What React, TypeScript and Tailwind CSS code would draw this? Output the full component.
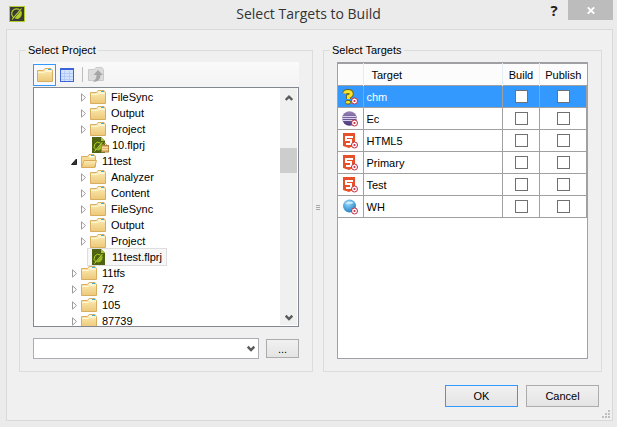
import React, { useState } from "react";

type NodeKind = "folder" | "open" | "file" | "locked";
type TreeNode = { label: string; level: 1 | 2; kind: NodeKind; selected?: boolean };

const NODES: TreeNode[] = [
  { label: "FileSync", level: 2, kind: "folder" },
  { label: "Output", level: 2, kind: "folder" },
  { label: "Project", level: 2, kind: "folder" },
  { label: "10.flprj", level: 2, kind: "locked" },
  { label: "11test", level: 1, kind: "open" },
  { label: "Analyzer", level: 2, kind: "folder" },
  { label: "Content", level: 2, kind: "folder" },
  { label: "FileSync", level: 2, kind: "folder" },
  { label: "Output", level: 2, kind: "folder" },
  { label: "Project", level: 2, kind: "folder" },
  { label: "11test.flprj", level: 2, kind: "file", selected: true },
  { label: "11tfs", level: 1, kind: "folder" },
  { label: "72", level: 1, kind: "folder" },
  { label: "105", level: 1, kind: "folder" },
  { label: "87739", level: 1, kind: "folder" },
];

type TargetKind = "help" | "eclipse" | "html5" | "globe";
const TARGETS: { name: string; kind: TargetKind }[] = [
  { name: "chm", kind: "help" },
  { name: "Ec", kind: "eclipse" },
  { name: "HTML5", kind: "html5" },
  { name: "Primary", kind: "html5" },
  { name: "Test", kind: "html5" },
  { name: "WH", kind: "globe" },
];

function Gradients() {
  return (
    <svg width="0" height="0" className="absolute" aria-hidden="true">
      <defs>
        <linearGradient id="folder" x1="0" y1="0" x2="0" y2="1">
          <stop offset="0" stopColor="#fdeeb8" />
          <stop offset="1" stopColor="#ecc877" />
        </linearGradient>
        <radialGradient id="globe" cx="0.4" cy="0.3" r="0.7">
          <stop offset="0" stopColor="#a9dcf8" />
          <stop offset="0.5" stopColor="#58aee2" />
          <stop offset="1" stopColor="#2f82c2" />
        </radialGradient>
        <linearGradient id="sphere" x1="0" y1="0" x2="0" y2="1">
          <stop offset="0" stopColor="#9a86b8" />
          <stop offset="1" stopColor="#4a3578" />
        </linearGradient>
      </defs>
    </svg>
  );
}

function FolderIcon() {
  return (
    <svg width="16" height="14" viewBox="0 0 16 14" aria-hidden="true">
      <path d="M0.5 13.5V2.5H6.5L8 0.5H14L15.5 2.5V13.5Z" fill="url(#folder)" stroke="#d8ae62" />
      <path d="M8.5 1.5H13.5V2.5H8Z" fill="#fff" />
      <path d="M11 1.5H14" stroke="#35b4cf" />
      <path d="M1 4.5H7L8.5 3.5H15" fill="none" stroke="#fff5d2" />
    </svg>
  );
}

function OpenFolderIcon() {
  return (
    <svg width="16" height="14" viewBox="0 0 16 14" aria-hidden="true">
      <path d="M0.5 13V2.5H6.5L8 0.5H13L14.5 2.5V13Z" fill="#f6dc94" stroke="#d8ae62" />
      <path d="M8.5 1.5H13V3.5H8Z" fill="#fff" />
      <path d="M10 1.5H13" stroke="#35b4cf" />
      <path d="M3 6.5H15.5L13.5 13.5H0.5Z" fill="url(#folder)" stroke="#d9ab58" />
    </svg>
  );
}

function ProjectIcon({ locked }: { locked?: boolean }) {
  return (
    <svg width="18" height="16" viewBox="0 0 18 16" aria-hidden="true">
      <path d="M0 0H9L13 4V16H0Z" fill="#4f6312" />
      <path d="M9 0L13 4H9Z" fill="#a9c43b" />
      <path d="M8.5 6A4 4 0 1 0 4 12.8" fill="none" stroke="#b3d12c" />
      <path d="M10 6.5C11.5 9 10 13 6 13.5L4.8 12.8Z" fill="#9dbd25" />
      <path d="M2.5 14.5L10.5 5" stroke="#c4e23a" />
      {locked && (
        <g>
          <path d="M11.5 9V7.5Q13 5 14.5 7.5V9" fill="none" stroke="#b98c4e" />
          <rect x="9.5" y="8.5" width="7" height="6.5" fill="#e3b66c" stroke="#b98543" />
          <path d="M10 10.5H16M10 12.5H16" stroke="#f7dca4" />
        </g>
      )}
    </svg>
  );
}

function Expander({ open }: { open?: boolean }) {
  return (
    <svg width="7" height="9" viewBox="0 0 7 9" aria-hidden="true">
      {open ? (
        <path d="M5.5 2V7.5H0.5Z" fill="#333" stroke="#222" />
      ) : (
        <path d="M1.5 0.8L5.5 4.5L1.5 8.2Z" fill="#fff" stroke="#9c9c9c" />
      )}
    </svg>
  );
}

function Bullseye() {
  return (
    <g>
      <circle cx="12.5" cy="12" r="3" fill="#fff" stroke="#c8283c" />
      <circle cx="12.5" cy="12" r="1.1" fill="#c8283c" />
    </g>
  );
}

function TargetIcon({ kind }: { kind: TargetKind }) {
  return (
    <svg width="16" height="16" viewBox="0 0 16 16" className="mx-auto block" aria-hidden="true">
      {kind === "help" && (
        <g>
          <path d="M2.5 4.5Q3 2.5 6 2.5Q9.3 2.5 9.3 5Q9.3 6.5 6.5 7.5V10" fill="none" stroke="#6d6412" strokeWidth="4.8" />
          <path d="M2.5 4.5Q3 2.5 6 2.5Q9.3 2.5 9.3 5Q9.3 6.5 6.5 7.5V10" fill="none" stroke="#f5e430" strokeWidth="3" />
          <rect x="3.5" y="11.5" width="5" height="3.5" rx="1.5" fill="#f5e430" stroke="#6d6412" />
        </g>
      )}
      {kind === "eclipse" && (
        <g>
          <circle cx="7.5" cy="7.5" r="7.3" fill="url(#sphere)" />
          <path d="M0.5 5.5H14.5M0 7.5H15M0.5 9.5H14.5" stroke="#d6d0ea" />
        </g>
      )}
      {kind === "html5" && (
        <g>
          <path d="M1 0H13V12L7 15L1 13Z" fill="#e8502a" />
          <path d="M3 3H11V5H5V6H10V12H4V10H8V8H3Z" fill="#fff" />
        </g>
      )}
      {kind === "globe" && (
        <g>
          <circle cx="7.5" cy="7" r="6.5" fill="url(#globe)" />
          <path d="M3 4.5Q7 1 12 4Q8 5.5 3 4.5Z" fill="#cdebfb" />
        </g>
      )}
      <Bullseye />
    </svg>
  );
}

function Chevron({ up }: { up?: boolean }) {
  return (
    <svg width="8" height="7" viewBox="0 0 8 7" aria-hidden="true">
      <path d={up ? "M0.7 5L4 1.7L7.3 5" : "M0.7 1.7L4 5L7.3 1.7"} fill="none" stroke="#5a5a5a" strokeWidth="2.4" />
    </svg>
  );
}

function TreeRow({ node }: { node: TreeNode }) {
  const isFile = node.kind === "file" || node.kind === "locked";
  return (
    <li
      role="treeitem"
      aria-selected={!!node.selected}
      className={`flex h-4 items-center ${node.level === 1 ? "pl-[37px]" : isFile ? "pl-[54px]" : "pl-[46px]"}`}
    >
      {!isFile && (
        <span className="mr-0.5 w-2 shrink-0">
          <Expander open={node.kind === "open"} />
        </span>
      )}
      <span
        className={`flex h-4 items-center ${node.selected ? "bg-[#f7f7f7] pr-1 outline outline-[#dedede]" : ""} ${
          isFile ? "gap-0.5 pl-1" : "gap-[5px]"
        }`}
      >
        {node.kind === "folder" && <FolderIcon />}
        {node.kind === "open" && <OpenFolderIcon />}
        {isFile && <ProjectIcon locked={node.kind === "locked"} />}
        <span>{node.label}</span>
      </span>
    </li>
  );
}

const LEGEND = "-ml-[7px] h-4 px-0.5 leading-4";
const BUTTON = "border border-[#acacac] bg-linear-to-b from-[#f1f1f1] to-[#e4e4e4]";

export default function App() {
  const [checked, setChecked] = useState<Record<string, boolean>>({});
  const toggle = (key: string) => setChecked((c) => ({ ...c, [key]: !c[key] }));

  return (
    <div className="flex min-h-screen flex-col bg-[#ebebeb] pr-1 pb-1.5 pl-1.5 font-['Liberation_Sans',sans-serif] text-[11px] leading-4 text-black">
      <Gradients />
      <header className="flex h-[29px] items-start">
        <svg width="16" height="16" viewBox="0 0 16 16" className="mt-1.5 ml-[3px]" aria-hidden="true">
          <rect x="0.5" y="0.5" width="15" height="15" fill="#3b3b35" stroke="#b5cc2e" />
          <path d="M10.5 3.8A4.8 4.8 0 1 0 4.6 11.5" fill="none" stroke="#b5cc2e" strokeWidth="1.2" />
          <path d="M12 4.5C14 8 12 12.5 8 13L5.5 12.3Z" fill="#b5cc2e" />
          <path d="M3 13.5L12.5 2.5" stroke="#c9e034" strokeWidth="1.1" />
        </svg>
        <h1 className="flex-1 pt-1 pl-[50px] text-center font-['Open_Sans',sans-serif] text-[14px] leading-5 text-[#333]">
          Select Targets to Build
        </h1>
        <button type="button" aria-label="Help" className="h-5 w-6 font-['Open_Sans',sans-serif] text-[15px] leading-5 font-bold text-[#222]">
          ?
        </button>
        <button type="button" aria-label="Close" className="ml-0.5 flex h-5 w-[45px] items-center justify-center bg-[#bcbcbc]">
          <svg width="8" height="7" viewBox="0 0 8 7" aria-hidden="true">
            <path d="M0.8 0.3L7.2 6.7M7.2 0.3L0.8 6.7" stroke="#fff" strokeWidth="1.8" />
          </svg>
        </button>
      </header>

      <main className="relative flex flex-1 flex-col border border-[#d9d9d9] bg-[#f0f0f0] pt-3 pr-[10px] pl-3">
        <div className="grid grid-cols-[294fr_10px_279fr]">
          <fieldset className="min-w-0 border border-[#dcdcdc] px-[13px] pb-3">
            <legend className={LEGEND}>Select Project</legend>
            <div className="mt-1 flex h-[25px] items-center bg-linear-to-b from-[#fafafa] to-[#f3f3f3]">
              <button type="button" aria-label="Folder view" className="flex h-[22px] w-[23px] items-center justify-center border border-[#3399ff] bg-[#f6f9fd]">
                <FolderIcon />
              </button>
              <button type="button" aria-label="List view" className="ml-1 flex size-[14px]">
                <svg width="14" height="14" viewBox="0 0 14 14" aria-hidden="true">
                  <rect x="0.5" y="0.5" width="13" height="13" fill="#d3e3fd" stroke="#3c63d8" />
                  <path d="M0 1.5H14" stroke="#3c63d8" />
                  <path d="M1 5.5H13M1 8.5H13M1 11.5H13M4.5 3V13M9.5 3V13" stroke="#b3cbf6" />
                </svg>
              </button>
              <span className="ml-2 h-[15px] w-px bg-[#bdbdbd]" />
              <button type="button" aria-label="Up one level" className="ml-[5px] flex h-4 w-[17px]">
                <svg width="17" height="16" viewBox="0 0 17 16" aria-hidden="true">
                  <path d="M0.5 13.5V2.5H6.5L8 0.5H14L15.5 2.5V13.5Z" fill="#dcdcdc" stroke="#cacaca" />
                  <path d="M10 3L15 8H12.5Q12.5 14.5 5 15Q8.5 12 8.5 8H5.5Z" fill="#a6a6a6" />
                </svg>
              </button>
            </div>
            <div className="flex h-60 border border-[#828790] bg-white pr-px">
              <ul role="tree" aria-label="Projects" className="h-full flex-1 overflow-hidden pt-px">
                {NODES.map((node, i) => (
                  <TreeRow key={i} node={node} />
                ))}
              </ul>
              <div className="mb-px flex w-[17px] flex-col items-center bg-[#f0f0f0]" aria-hidden="true">
                <span className="flex h-5 items-center">
                  <Chevron up />
                </span>
                <span className="mt-10 h-[25px] w-full bg-[#cdcdcd]" />
                <span className="mt-auto flex h-4 items-center">
                  <Chevron />
                </span>
              </div>
            </div>
            <div className="mt-[11px] flex items-center gap-[7px]">
              <div className="relative flex-1">
                <select aria-label="Project path" className="block h-[21px] w-full appearance-none border border-[#abadb3] bg-white px-1">
                  <option></option>
                </select>
                <span className="pointer-events-none absolute top-[7px] right-1">
                  <Chevron />
                </span>
              </div>
              <button type="button" aria-label="Browse" className={`h-[19px] w-[33px] leading-4 ${BUTTON}`}>
                ...
              </button>
            </div>
          </fieldset>

          <div className="flex flex-col items-center justify-center gap-px" aria-hidden="true">
            <span className="h-px w-1 bg-[#a8a8a8]" />
            <span className="h-px w-1 bg-[#a8a8a8]" />
            <span className="h-px w-1 bg-[#a8a8a8]" />
          </div>

          <fieldset className="min-w-0 border border-[#dcdcdc] px-[13px] pb-3">
            <legend className={LEGEND}>Select Targets</legend>
            <div className="mt-1 h-[297px] border border-[#a0a0a8] bg-white">
              <table className="w-full table-fixed border-collapse border-t border-[#a0a0a0] text-left">
                <colgroup>
                  <col className="w-[25px]" />
                  <col />
                  <col className="w-[37px]" />
                  <col className="w-[47px]" />
                </colgroup>
                <thead>
                  <tr className="h-[22px] bg-[#fcfcfd]">
                    <th className="border-r border-[#e3edf8]" aria-label="Type" />
                    <th className="border-r border-[#e3edf8] pl-2 font-normal">Target</th>
                    <th className="border-r border-[#e3edf8] text-center font-normal">Build</th>
                    <th className="text-center font-normal">Publish</th>
                  </tr>
                </thead>
                <tbody>
                  {TARGETS.map((t, i) => (
                    <tr key={t.name} className={`h-[22px] border-y border-[#a0a0a0] ${i === 0 ? "bg-[#3399ff] text-white" : ""}`}>
                      <td className="border-r border-[#a0a0a0] p-0">
                        <TargetIcon kind={t.kind} />
                      </td>
                      <td className="border-r border-[#a0a0a0] py-0 pl-[3px]">{t.name}</td>
                      {["Build", "Publish"].map((col) => (
                        <td key={col} className="border-r border-[#a0a0a0] p-0">
                          <input
                            type="checkbox"
                            aria-label={`${col} ${t.name}`}
                            checked={!!checked[t.name + col]}
                            onChange={() => toggle(t.name + col)}
                            className="mx-auto block size-[13px] appearance-none border border-[#707070] bg-white checked:bg-[#3399ff]"
                          />
                        </td>
                      ))}
                    </tr>
                  ))}
                </tbody>
              </table>
            </div>
          </fieldset>
        </div>

        <div className="mt-[13px] mb-3 flex justify-end gap-2 pr-[3px]">
          <button type="button" className="h-[22px] w-[73px] border border-[#3399ff] bg-linear-to-b from-[#f1f1f1] to-[#e4e4e4]">
            OK
          </button>
          <button type="button" className={`h-[22px] w-[73px] ${BUTTON}`}>
            Cancel
          </button>
        </div>
        <svg width="8" height="8" viewBox="0 0 8 8" className="absolute right-0.5 bottom-0.5" aria-hidden="true">
          <path d="M6 0h2v2h-2zM3 3h2v2h-2zM6 3h2v2h-2zM0 6h2v2h-2zM3 6h2v2h-2zM6 6h2v2h-2z" fill="#bfbfbf" />
        </svg>
      </main>
    </div>
  );
}
